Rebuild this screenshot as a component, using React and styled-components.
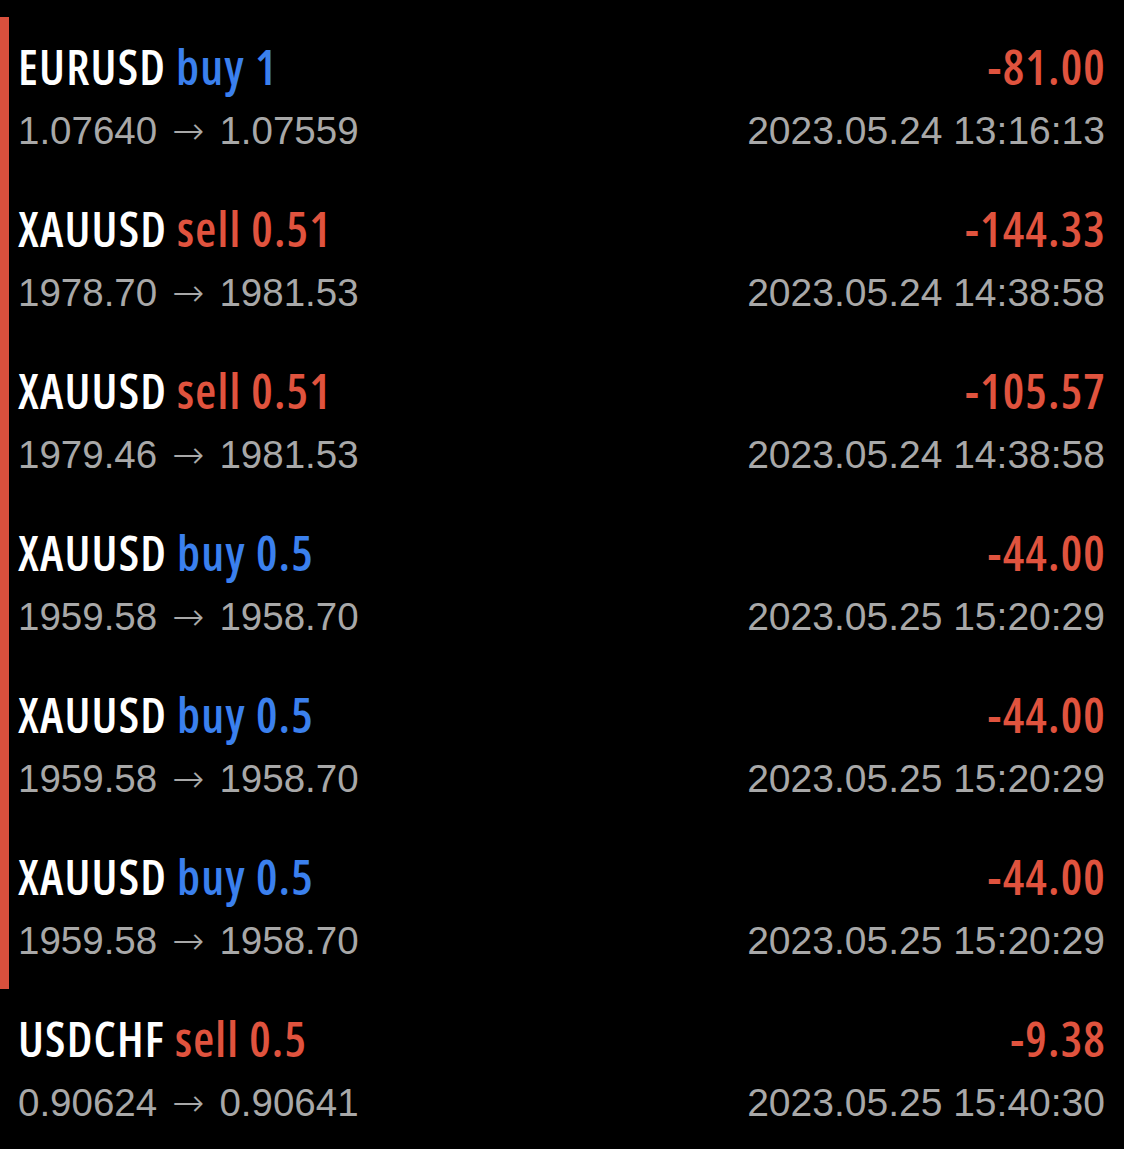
import React from 'react'
import styled, {createGlobalStyle} from 'styled-components'

const GlobalStyle = createGlobalStyle`
    html, body {
        margin: 0;
        padding: 0;
        background: #000;
    }
`

const List = styled.div`
    padding-top: 17px;
    height: 1149px;
    box-sizing: border-box;
    overflow: hidden;
    background: #000;
`

const Row = styled.div`
    height: 162px;
    box-sizing: border-box;
    padding: 18px 19px 0 9px;
    border-left: 9px solid ${props => props.marked ? '#d9503d' : 'transparent'};
`

const Line = styled.div`
    display: flex;
    justify-content: space-between;
    align-items: baseline;
    height: 64px;
    line-height: 64px;
`

const Title = styled.div`
    font-family: 'Open Sans', 'Liberation Sans Narrow', sans-serif;
    font-stretch: 75%;
    font-weight: 600;
    font-size: 48px;
    letter-spacing: 1.2px;
    color: #fff;
`

const Side = styled.span`
    color: ${props => props.kind === 'buy' ? '#3b80ee' : '#e0533e'};
`

const Profit = styled.div`
    font-family: 'Open Sans', 'Liberation Sans Narrow', sans-serif;
    font-stretch: 75%;
    font-weight: 600;
    font-size: 48px;
    letter-spacing: 1.2px;
    margin-right: -1px;
    color: #e0533e;
`

const Prices = styled.div`
    font-family: 'Liberation Sans', Arial, sans-serif;
    font-size: 38.5px;
    color: #a8a8a8;
`

const Arrow = styled.span`
    font-family: 'DejaVu Sans', sans-serif;
    font-weight: 200;
    margin: 0 15px;
`

const Time = styled.div`
    font-family: 'Liberation Sans', Arial, sans-serif;
    font-size: 39px;
    color: #a8a8a8;
`

const deals = [
    {symbol: 'EURUSD', side: 'buy', volume: '1', open: '1.07640', close: '1.07559', profit: '-81.00', time: '2023.05.24 13:16:13', marked: true},
    {symbol: 'XAUUSD', side: 'sell', volume: '0.51', open: '1978.70', close: '1981.53', profit: '-144.33', time: '2023.05.24 14:38:58', marked: true},
    {symbol: 'XAUUSD', side: 'sell', volume: '0.51', open: '1979.46', close: '1981.53', profit: '-105.57', time: '2023.05.24 14:38:58', marked: true},
    {symbol: 'XAUUSD', side: 'buy', volume: '0.5', open: '1959.58', close: '1958.70', profit: '-44.00', time: '2023.05.25 15:20:29', marked: true},
    {symbol: 'XAUUSD', side: 'buy', volume: '0.5', open: '1959.58', close: '1958.70', profit: '-44.00', time: '2023.05.25 15:20:29', marked: true},
    {symbol: 'XAUUSD', side: 'buy', volume: '0.5', open: '1959.58', close: '1958.70', profit: '-44.00', time: '2023.05.25 15:20:29', marked: true},
    {symbol: 'USDCHF', side: 'sell', volume: '0.5', open: '0.90624', close: '0.90641', profit: '-9.38', time: '2023.05.25 15:40:30', marked: false},
]

export default function App() {
    return (
        <>
            <GlobalStyle/>
            <List>
                {deals.map((d, i) => (
                    <Row key={i} marked={d.marked}>
                        <Line>
                            <Title>
                                {d.symbol} <Side kind={d.side}>{d.side} {d.volume}</Side>
                            </Title>
                            <Profit>{d.profit}</Profit>
                        </Line>
                        <Line>
                            <Prices>
                                {d.open}<Arrow>→</Arrow>{d.close}
                            </Prices>
                            <Time>{d.time}</Time>
                        </Line>
                    </Row>
                ))}
            </List>
        </>
    )
}
